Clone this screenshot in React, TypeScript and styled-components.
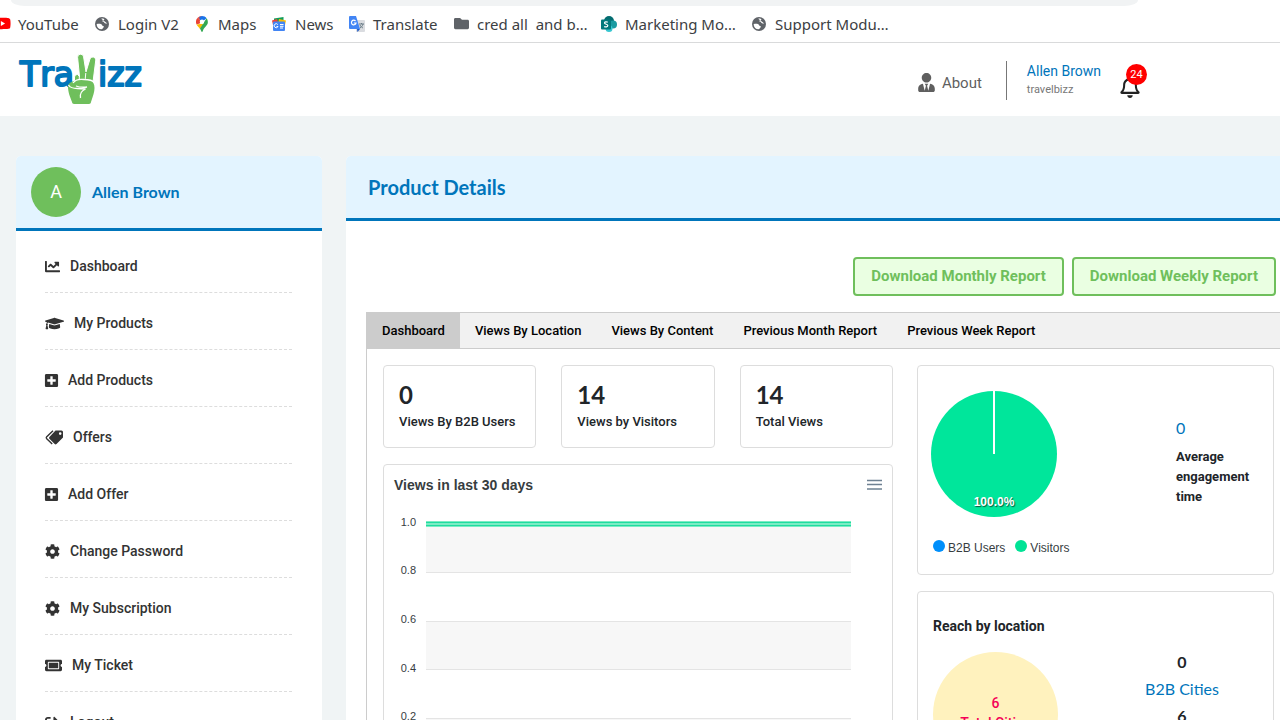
import React from 'react';
import styled, { createGlobalStyle } from 'styled-components';
import { FaChartLine, FaGraduationCap, FaPlusSquare, FaCog, FaTicketAlt, FaSignOutAlt, FaUserTie, FaRegBell, FaYoutube, FaFolder } from 'react-icons/fa';

const sans = "Roboto, 'Liberation Sans', sans-serif";
const display = "Lato, Roboto, sans-serif";
const brand = '#0075bb';
const leaf = '#6fbf5c';

const Global = createGlobalStyle`
  * { box-sizing: border-box; }
  html { scrollbar-width: none; }
  body { margin: 0; background: #f0f4f5; font-family: ${sans}; color: #212529; }
  a { color: inherit; text-decoration: none; }
  h1, h2, p { margin: 0; }
  svg { display: block; flex: none; }
`;

const Browser = styled.div`
  background: #fff;
  border-bottom: 1px solid #d9dadb;
  overflow: hidden;
`;
const AddressBar = styled.div`
  height: 6px;
  margin: 0 142px 0 11px;
  background: #f1f3f4;
  border-radius: 0 0 14px 14px / 0 0 6px 6px;
`;
const Bookmarks = styled.nav`
  display: flex;
  gap: 16px;
  height: 36px;
  padding-bottom: 1px;
  align-items: center;
  margin-left: -6px;
`;
const Bookmark = styled.a<{ $w: number }>`
  display: flex;
  gap: 8px;
  align-items: center;
  flex: none;
  width: ${p => p.$w + 24}px;
  font: 15px/20px 'Noto Sans', sans-serif;
  color: #3c4043;
  white-space: pre;
`;
const IconSlot = styled.span<{ $w?: number }>`
  display: flex;
  justify-content: center;
  flex: 0 0 ${p => p.$w ?? 16}px;
  min-width: 0;
`;

const Header = styled.header`
  display: flex;
  justify-content: space-between;
  align-items: center;
  height: 73px;
  padding: 0 139px 0 16px;
  background: #fff;
`;
const Account = styled.div`
  display: flex;
  align-items: center;
  height: 41px;
  padding-top: 2px;
`;
const About = styled.a`
  display: flex;
  align-items: center;
  gap: 6px;
  padding: 4px 24px 0 0;
  font-size: 15px;
  line-height: 20px;
  color: #5f5f5f;
`;
const User = styled.a`
  height: 39px;
  padding-left: 20px;
  border-left: 1px solid #777;
  font-size: 14px;
  line-height: 20px;
  color: ${brand};
  small { display: block; font-size: 11px; line-height: 18px; color: #777; }
`;
const BellButton = styled.button`
  position: relative;
  margin-left: 18px;
  padding: 12px 0 0;
  border: 0;
  background: none;
  color: #222;
`;
const Badge = styled.span`
  position: absolute;
  top: 0;
  left: 7px;
  width: 21px;
  height: 21px;
  border-radius: 50%;
  background: #f00;
  color: #fff;
  font: 11px/21px ${sans};
  text-align: center;
`;

const Main = styled.main`
  display: flex;
  align-items: flex-start;
  gap: 24px;
  padding: 40px 0 40px 16px;
`;
const Sidebar = styled.aside`
  flex: 0 0 306px;
  background: #fff;
  border-radius: 5px;
`;
const Profile = styled.div`
  display: flex;
  align-items: center;
  gap: 11px;
  height: 75px;
  padding: 0 15px;
  background: #e3f4ff;
  border-bottom: 3px solid ${brand};
  border-radius: 5px 5px 0 0;
  font: 700 16px/20px ${display};
  color: ${brand};
`;
const Avatar = styled.span`
  width: 50px;
  height: 50px;
  border-radius: 50%;
  background: ${leaf};
  color: #fff;
  font: 18px/50px ${sans};
  text-align: center;
`;
const Menu = styled.ul`
  margin: 0;
  padding: 5px 30px 20px 29px;
  list-style: none;
`;
const MenuItem = styled.li`
  height: 57px;
  padding-top: 20px;
  border-bottom: 1px dashed #ddd;
  a { display: flex; align-items: center; gap: 10px; font: 500 14px/20px ${sans}; color: #333; }
`;

const Content = styled.section`
  flex: 1;
  min-width: 0;
  background: #fff;
  border-radius: 5px 0 0 5px;
`;
const TitleBar = styled.div`
  height: 65px;
  padding: 18px 22px;
  background: #e3f4ff;
  border-bottom: 3px solid ${brand};
  border-radius: 5px 0 0 0;
  h1 { font: 700 20px/26px ${display}; color: ${brand}; }
`;
const Actions = styled.div`
  display: flex;
  justify-content: flex-end;
  gap: 8px;
  padding: 36px 4px 16px;
`;
const ReportButton = styled.button`
  height: 39px;
  padding: 0 16px 2px;
  border: 2px solid ${leaf};
  border-radius: 4px;
  background: #eaffe2;
  color: ${leaf};
  font: 700 15px/20px ${sans};
`;
const Tabs = styled.div`
  display: flex;
  height: 37px;
  margin-left: 20px;
  border: 1px solid #ccc;
  border-right: 0;
  background: #f1f1f1;
`;
const Tab = styled.button<{ $active?: boolean }>`
  padding: 0 15px;
  border: 0;
  background: ${p => (p.$active ? '#ccc' : 'transparent')};
  color: #000;
  font: 500 13px/20px ${sans};
`;
const Panel = styled.div`
  display: grid;
  grid-template-columns: 510fr 357fr;
  gap: 24px;
  margin-left: 20px;
  padding: 16px 6px 16px 16px;
  border-left: 1px solid #ccc;
`;
const Column = styled.div`
  display: flex;
  flex-direction: column;
  gap: 16px;
`;
const Stats = styled.div`
  display: grid;
  grid-template-columns: repeat(3, 1fr);
  gap: 25px;
`;
const Card = styled.div`
  border: 1px solid #ddd;
  border-radius: 4px;
  background: #fff;
`;
const Stat = styled(Card)`
  height: 83px;
  padding: 12px 15px;
  font: 500 13px/20px ${sans};
  white-space: nowrap;
  strong { display: block; font: 700 24px/34px ${display}; }
`;
const Engagement = styled(Card)`
  display: flex;
  justify-content: space-between;
  height: 210px;
  padding: 24px 15px 0 12px;
`;
const EngagementText = styled.div`
  width: 82px;
  padding-top: 27px;
  font: 700 13px/20px ${sans};
  strong { display: block; padding-bottom: 8px; font: 400 16px/22px ${display}; color: ${brand}; }
`;
const Legend = styled.div`
  display: flex;
  gap: 10px;
  padding: 22px 3px 0;
  font: 12px/16px 'Liberation Sans', sans-serif;
  color: #373d3f;
  white-space: nowrap;
`;
const LegendItem = styled.span<{ $color: string }>`
  display: flex;
  gap: 3px;
  &::before { content: ''; width: 12px; height: 12px; border-radius: 50%; background: ${p => p.$color}; }
`;
const Reach = styled(Card)`
  padding: 24px 15px;
  h2 { font: 700 14px/20px ${sans}; }
`;
const ReachBody = styled.div`
  display: flex;
  justify-content: space-between;
  padding-top: 12px;
`;
const Circle = styled.div`
  width: 125px;
  height: 125px;
  margin-top: 4px;
  padding-top: 41px;
  border-radius: 50%;
  background: #fff2be;
  color: #f50057;
  font: 500 14px/20px ${sans};
  text-align: center;
`;
const Cities = styled.div`
  width: 152px;
  font: 700 16px/27px ${display};
  text-align: center;
  a { font-weight: 400; color: ${brand}; }
`;

const Globe = () => (
  <svg width="14" height="14" viewBox="0 0 14 14">
    <circle cx="7" cy="7" r="7" fill="#5f6368" />
    <path d="M1.600 7.200C3 6.600 5 6.800 6.300 7.200 7.400 7.600 7 8.900 8 9c1.300.1 1 1.200.2 1.700-.8.500-.4 1.300-1.700 1.600C3.800 12.200 1.700 10.200 1.600 7.200zM6.200 1.800C7.800 1.300 9 1.700 9.300 2.200 9.500 3 8.600 3.200 7.700 3.500 6.800 3.800 7.200 4.500 8 4.600c.9.100.9 1 1.600 1.400.8.500 1.800.8 2.700.5" fill="#fff" />
  </svg>
);
const Pin = () => (
  <svg width="12" height="16" viewBox="0 0 12 16">
    <path d="M6 0a6 6 0 0 0-4.600 2.100L4 4.300z" fill="#ea4335" />
    <path d="M1.400 2.100a6 6 0 0 0-.8 6.500L4.200 7.200 4 4.200z" fill="#ea4335" />
    <path d="M6 0c2 0 3.500.8 4.600 2.200L7.500 4.700 4 4.300 3.200 1z" fill="#1a73e8" />
    <path d="M.6 8.600C1.400 10.200 3 11.500 4 13l6-9.500-2.200 4z" fill="#fbbc04" />
    <path d="M10.600 2.200C12 4 12.300 6.500 11.200 8.600 10 10.800 7.500 12 6.800 15c-.3 1.200-1.300 1.200-1.600 0L4 12.500z" fill="#34a853" />
    <circle cx="6" cy="5.800" r="2.200" fill="#fff" />
  </svg>
);
const News = () => (
  <svg width="16" height="16" viewBox="0 0 16 16">
    <path d="M3 2.500l9.500-1.500v6H3z" fill="#0f9d58" />
    <path d="M1 4.500l5-1.500 2 6H2z" fill="#ea4335" />
    <path d="M15 4.500L8 3 7 9h7z" fill="#fbbc04" />
    <rect x="2" y="5.500" width="12" height="9.500" rx="1" fill="#4285f4" />
    <path d="M6.800 8.600A2 2 0 1 0 7 10.500H5.500M9 8.500h3.500M9 10.300h3.500M9 12h3" fill="none" stroke="#fff" />
  </svg>
);
const Translate = () => (
  <svg width="16" height="16" viewBox="0 0 16 16">
    <rect x="7" y="4" width="9" height="12" rx="1" fill="#dadce0" />
    <path d="M10 8h5M12.500 7v1M14 8c-.5 2-1.500 3-3 4M11 9c.5 1.500 2 2.500 3 3" stroke="#6b7d88" fill="none" />
    <path d="M8 13h3l-2.500 3z" fill="#1a56c4" />
    <path d="M1 0h6l4 13H1a1 1 0 0 1-1-1V1a1 1 0 0 1 1-1z" fill="#4285f4" />
    <path d="M6.500 5A2.300 2.300 0 1 0 7 7H4.800" stroke="#fff" fill="none" strokeWidth="1.200" />
  </svg>
);
const SharePoint = () => (
  <svg width="16" height="16" viewBox="0 0 16 16">
    <circle cx="8" cy="5" r="5" fill="#036c70" />
    <circle cx="12" cy="8.500" r="4" fill="#1a9ba1" />
    <circle cx="8" cy="12.500" r="3.500" fill="#37c6d0" />
    <rect y="3.500" width="10" height="10" rx="1" fill="#03787c" />
    <path d="M6.800 6.300C5.500 5.400 3.500 5.800 3.500 7c0 1.600 3.300 1 3.300 2.600 0 1.300-2.200 1.700-3.600.8" stroke="#fff" fill="none" strokeWidth="1.200" />
  </svg>
);
const Tags = () => (
  <svg width="18" height="15" viewBox="0 0 18 15">
    <path d="M10.500.5h6A1.500 1.500 0 0 1 18 2v5.500l-6.500 6.600a1.300 1.300 0 0 1-1.800 0L4.400 8.700a1.300 1.300 0 0 1 0-1.800zM15.200 2.300a1.300 1.300 0 1 0 0 2.600 1.300 1.300 0 0 0 0-2.600z" fill="#333" fillRule="evenodd" />
    <path d="M8 .8L1.500 7.100a1 1 0 0 0 0 1.300l5.700 5.700" fill="none" stroke="#333" strokeWidth="1.400" />
  </svg>
);
const Wordmark = styled.g`
  font: 33px 'DejaVu Sans', sans-serif;
  font-kerning: none;
  fill: ${brand};
  stroke: ${brand};
  stroke-width: 2px;
  stroke-linejoin: round;
`;
const Logo = () => (
  <svg width="130" height="56" viewBox="0 0 130 56" role="img" aria-label="Travizz">
    <Wordmark>
      <text x="4" y="34">Tra</text>
      <text x="82" y="34">izz</text>
    </Wordmark>
    <path d="M58.500 36V25a2.700 2.700 0 0 1 3-2.500l2 2L61.600 5.500a3 3 0 0 1 6-.6l2.400 15 4-13a3 3 0 0 1 5.800 1L77 30z" fill={leaf} stroke="#fff" strokeWidth="1" />
    <path d="M63.300 24v8M69.800 21l-.6 6" stroke="#fff" strokeWidth="1" />
    <path d="M52 34c0-3 5-5 9-6 4-1 10-1 13 0 3 1 4.500 4 4.500 8s-1.500 8-3.500 14c0 1-1 2-2 2H58c-1 0-2-1-2-2-2-6-4-9-4-16z" fill={leaf} />
    <path d="M57 31c2-3 7-4 11-3.500 4 0 8 0 10 3M52.500 33c2 3.500 6 3.500 9 3.500l8 .5c-3.500 1.500-6 4-5 9M60 34c4 1.500 7 1.500 11 1" fill="none" stroke="#fff" strokeWidth="1.300" />
  </svg>
);

const bookmarks: [string, number, React.ReactNode][] = [
  ['YouTube', 60, <FaYoutube size={17} color="#f00" />],
  ['Login V2', 60, <Globe />],
  ['Maps', 37, <Pin />],
  ['News', 38, <News />],
  ['Translate', 64, <Translate />],
  ['cred all  and b…', 108, <FaFolder size={15} color="#5f6368" />],
  ['Marketing Mo…', 110, <SharePoint />],
  ['Support Modu…', 114, <Globe />],
];
const menu: [string, number, React.ReactNode][] = [
  ['Dashboard', 15, <FaChartLine size={15} />],
  ['My Products', 19, <FaGraduationCap size={19} />],
  ['Add Products', 13, <FaPlusSquare size={15} />],
  ['Offers', 18, <Tags />],
  ['Add Offer', 13, <FaPlusSquare size={15} />],
  ['Change Password', 15, <FaCog size={15} />],
  ['My Subscription', 15, <FaCog size={15} />],
  ['My Ticket', 17, <FaTicketAlt size={17} />],
  ['Logout', 15, <FaSignOutAlt size={15} />],
];
const tabs = ['Dashboard', 'Views By Location', 'Views By Content', 'Previous Month Report', 'Previous Week Report'];
const stats = [['0', 'Views By B2B Users'], ['14', 'Views by Visitors'], ['14', 'Total Views']];

const LineChart = () => (
  <svg width="100%" viewBox="0 0 508 330" fontFamily="'Liberation Sans', sans-serif">
    <text x="10" y="25" fontSize="14" fontWeight="700" fill="#373d3f">Views in last 30 days</text>
    <path d="M483 15.500h15M483 19.500h15M483 24h15" stroke="#6e8192" strokeWidth="1.700" />
    {[0, 1, 2, 3, 4, 5].map(i => (
      <g key={i}>
        {i % 2 === 0 && i < 5 && <rect x="42" y={58 + Math.round(i * 48.8)} width="425" height="49" fill="#f7f7f7" />}
        <path d={`M42 ${58.5 + Math.round(i * 48.8)}h425`} stroke="#e4e4e4" />
        <text x="32" y={61 + Math.floor(i * 48.7)} fontSize="11" textAnchor="end" fill="#373d3f">{(1 - i * 0.2).toFixed(1)}</text>
      </g>
    ))}
    <rect x="42" y="56" width="425" height="6" fill="#7becc4" />
    <path d="M42 57.500h425M42 60.500h425" stroke="#1fdc9f" />
  </svg>
);

const PieLabel = styled.text`
  font: 700 12px 'Liberation Sans', sans-serif;
  fill: #fff;
  text-shadow: 1px 1px 1px rgba(0, 0, 0, 0.6);
`;
const Pie = () => (
  <svg width="128" height="128" viewBox="0 0 128 128">
    <circle cx="64" cy="64" r="63" fill="#00e69b" />
    <path d="M64 0v64" stroke="#fff" strokeWidth="2" />
    <PieLabel x="64" y="116" textAnchor="middle">100.0%</PieLabel>
  </svg>
);

export default function App() {
  return (
    <>
      <Global />
      <Browser>
        <AddressBar />
        <Bookmarks>
          {bookmarks.map(([name, w, icon]) => (
            <Bookmark key={name} $w={w} href="#"><IconSlot>{icon}</IconSlot>{name}</Bookmark>
          ))}
        </Bookmarks>
      </Browser>
      <Header>
        <a href="#"><Logo /></a>
        <Account>
          <About href="#"><FaUserTie size={19} />About</About>
          <User href="#">Allen Brown<small>travelbizz</small></User>
          <BellButton aria-label="Notifications"><FaRegBell size={22} /><Badge>24</Badge></BellButton>
        </Account>
      </Header>
      <Main>
        <Sidebar>
          <Profile><Avatar>A</Avatar>Allen Brown</Profile>
          <Menu>
            {menu.map(([name, w, icon]) => (
              <MenuItem key={name}><a href="#"><IconSlot $w={w}>{icon}</IconSlot>{name}</a></MenuItem>
            ))}
          </Menu>
        </Sidebar>
        <Content>
          <TitleBar><h1>Product Details</h1></TitleBar>
          <Actions>
            <ReportButton>Download Monthly Report</ReportButton>
            <ReportButton>Download Weekly Report</ReportButton>
          </Actions>
          <Tabs>{tabs.map((t, i) => <Tab key={t} $active={i === 0}>{t}</Tab>)}</Tabs>
          <Panel>
            <Column>
              <Stats>{stats.map(([n, label]) => <Stat key={label}><strong>{n}</strong>{label}</Stat>)}</Stats>
              <Card><LineChart /></Card>
            </Column>
            <Column>
              <Engagement>
                <div>
                  <Pie />
                  <Legend>
                    <LegendItem $color="#008ffb">B2B Users</LegendItem>
                    <LegendItem $color="#00e396">Visitors</LegendItem>
                  </Legend>
                </div>
                <EngagementText><strong>0</strong>Average engagement time</EngagementText>
              </Engagement>
              <Reach>
                <h2>Reach by location</h2>
                <ReachBody>
                  <Circle>6<br />Total Cities</Circle>
                  <Cities>0<br /><a href="#">B2B Cities</a><br />6<br /><a href="#">Visitor Cities</a></Cities>
                </ReachBody>
              </Reach>
            </Column>
          </Panel>
        </Content>
      </Main>
    </>
  );
}
